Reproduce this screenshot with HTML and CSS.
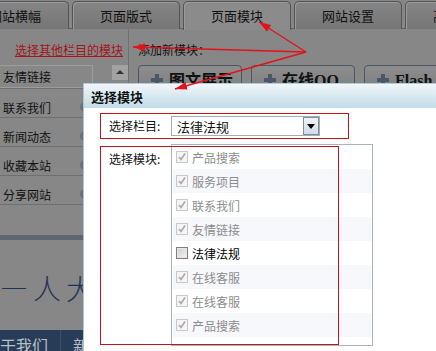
FILE: index.html
```html
<!DOCTYPE html>
<html lang="zh-CN">
<head>
    <meta charset="UTF-8">
    <meta name="viewport" content="width=device-width, initial-scale=1.0">
    <title>选择模块</title>
    <link rel="stylesheet" href="styles.css">
</head>
<body>

<div class="page">
    <div class="tabs">
        <div class="tab">网站横幅</div>
        <div class="tab">页面版式</div>
        <div class="tab active">页面模块</div>
        <div class="tab">网站设置</div>
        <div class="tab">高级设置</div>
    </div>

    <div class="main">
        <div class="side">
            <a class="side-link" href="#">选择其他栏目的模块</a>
            <ul class="mod-list">
                <li class="first"><span class="name-box">友情链接</span><span class="up-btn"></span></li>
                <li><span>联系我们</span><i class="gear"></i></li>
                <li><span>新闻动态</span><i class="gear"></i></li>
                <li><span>收藏本站</span><i class="gear"></i></li>
                <li><span>分享网站</span><i class="gear"></i></li>
            </ul>
        </div>
        <div class="content">
            <div class="add-title">添加新模块：</div>
            <div class="add-buttons">
                <div class="add-btn"><svg width="12" height="12" viewBox="0 0 12 12"><path d="M4 0h4v4h4v4h-4v4h-4v-4h-4v-4h4z" fill="#4c5666"/></svg>图文展示</div>
                <div class="add-btn"><svg width="12" height="12" viewBox="0 0 12 12"><path d="M4 0h4v4h4v4h-4v4h-4v-4h-4v-4h4z" fill="#4c5666"/></svg>在线QQ</div>
                <div class="add-btn"><svg width="12" height="12" viewBox="0 0 12 12"><path d="M4 0h4v4h4v4h-4v4h-4v-4h-4v-4h4z" fill="#4c5666"/></svg>Flash</div>
            </div>
        </div>
    </div>

    <div class="band"></div>
    <div class="banner">—人大代表</div>
    <div class="nav">
        <span class="nav-item">关于我们</span>
        <span class="nav-item">新闻中心</span>
    </div>

    <!-- popup -->
    <div class="dialog">
        <div class="dlg-title">选择模块</div>
        <div class="dlg-body">
            <div class="field">
                <label class="field-label">选择栏目:</label>
                <div class="select">
                    <span class="select-text">法律法规</span>
                    <span class="select-btn"><svg width="8" height="5" viewBox="0 0 8 5"><path d="M0 0h8l-4 5z" fill="#000"/></svg></span>
                </div>
            </div>
            <div class="field2">
                <label class="field-label">选择模块:</label>
                <div class="listbox">
                    <div class="row"><span class="cb"><svg width="10" height="10" viewBox="0 0 10 10"><path d="M2 5l2 2.5 4-6" stroke="#a9a9a9" stroke-width="1.6" fill="none"/></svg></span>产品搜索</div>
                    <div class="row"><span class="cb"><svg width="10" height="10" viewBox="0 0 10 10"><path d="M2 5l2 2.5 4-6" stroke="#a9a9a9" stroke-width="1.6" fill="none"/></svg></span>服务项目</div>
                    <div class="row"><span class="cb"><svg width="10" height="10" viewBox="0 0 10 10"><path d="M2 5l2 2.5 4-6" stroke="#a9a9a9" stroke-width="1.6" fill="none"/></svg></span>联系我们</div>
                    <div class="row"><span class="cb"><svg width="10" height="10" viewBox="0 0 10 10"><path d="M2 5l2 2.5 4-6" stroke="#a9a9a9" stroke-width="1.6" fill="none"/></svg></span>友情链接</div>
                    <div class="row on"><span class="cb"></span>法律法规</div>
                    <div class="row"><span class="cb"><svg width="10" height="10" viewBox="0 0 10 10"><path d="M2 5l2 2.5 4-6" stroke="#a9a9a9" stroke-width="1.6" fill="none"/></svg></span>在线客服</div>
                    <div class="row"><span class="cb"><svg width="10" height="10" viewBox="0 0 10 10"><path d="M2 5l2 2.5 4-6" stroke="#a9a9a9" stroke-width="1.6" fill="none"/></svg></span>在线客服</div>
                    <div class="row"><span class="cb"><svg width="10" height="10" viewBox="0 0 10 10"><path d="M2 5l2 2.5 4-6" stroke="#a9a9a9" stroke-width="1.6" fill="none"/></svg></span>产品搜索</div>
                </div>
                <div class="mark"></div>
            </div>
        </div>
    </div>

    <!-- annotation arrows -->
    <svg class="arrows" width="436" height="351" viewBox="0 0 436 351">
        <defs>
            <marker id="ah" markerWidth="12" markerHeight="8" refX="12" refY="4" orient="auto" markerUnits="userSpaceOnUse">
                <path d="M0 0L12 4L0 8z" fill="#e3121b"/>
            </marker>
        </defs>
        <g stroke="#e3121b" stroke-width="1.3">
            <line x1="306" y1="52" x2="259" y2="22" marker-end="url(#ah)"/>
            <line x1="306" y1="52" x2="133" y2="47" marker-end="url(#ah)"/>
            <line x1="306" y1="52" x2="175" y2="89" marker-end="url(#ah)"/>
        </g>
    </svg>
</div>

</body>
</html>
```

FILE: styles.css
```css
/* Reset */
* {
    box-sizing: border-box;
    margin: 0;
    padding: 0;
}

body {
    font-family: "Noto Sans CJK SC", "DejaVu Sans", sans-serif;
    font-size: 12px;
    background-color: #878787;
    overflow: hidden;
}

.page {
    position: relative;
    width: 436px;
    height: 351px;
    overflow: hidden;
}

/* top tabs */
.tabs {
    display: flex;
    height: 29px;
    margin-left: -39px;
    padding-top: 1px;
    border-bottom: 1px solid #5f5f5f;
    background-color: #878787;
}

.tab {
    flex: 0 0 108px;
    height: 28px;
    margin-right: 3px;
    border: 1px solid #545454;
    border-bottom: none;
    border-radius: 5px 5px 0 0;
    background: linear-gradient(#858585, #767676);
    box-shadow: inset 1px 1px 0 #9b9b9b;
    text-align: center;
    line-height: 27px;
    font-size: 13px;
    color: #111;
}

.tab.active {
    height: 29px;
    background: #8b8b8b;
    margin-bottom: -1px;
}

/* page body under tabs */
.main {
    display: flex;
    height: 206px;
}

.side {
    width: 139px;
    border-right: 1px solid #707070;
}

.side-link {
    display: block;
    padding: 14px 0 0 15px;
    line-height: 14px;
    color: #a3141b;
    font-size: 12px;
}

.mod-list {
    list-style: none;
    margin-top: 3px;
}

.mod-list li {
    display: flex;
    align-items: center;
    height: 29px;
    padding: 10px 0 2px 3px;
    border-bottom: 1px solid #6f6f6f;
    font-size: 12px;
    color: #111;
}

.mod-list li.first {
    padding: 5px 0 0 0;
    align-items: flex-start;
}

.name-box {
    width: 93px;
    height: 23px;
    padding: 3px 0 0 3px;
    border: 1px solid #9c9c9c;
    border-left: none;
    line-height: 16px;
}

.up-btn {
    width: 16px;
    height: 15px;
    margin-left: 19px;
    background: #a2a2a2;
    position: relative;
}

.up-btn::after {
    content: "";
    position: absolute;
    left: 4px;
    top: 5px;
    border: 4px solid transparent;
    border-top: none;
    border-bottom: 4px solid #333;
}

.gear {
    width: 10px;
    height: 10px;
    margin-left: 29px;
    border-radius: 50%;
    background: #6c6f75;
}

.content {
    flex: 1;
    padding: 14px 0 0 9px;
}

.add-title {
    line-height: 14px;
    color: #111;
}

.add-buttons {
    display: flex;
    gap: 9px;
    margin-top: 8px;
}

.add-btn {
    display: flex;
    align-items: flex-start;
    gap: 6px;
    flex: 0 0 104px;
    height: 30px;
    padding: 5px 0 0 12px;
    border: 1px solid #4d5463;
    border-radius: 4px;
    background: linear-gradient(#8d8d8d, #7c7c7c);
    font-family: "Liberation Serif", "Noto Sans CJK SC", serif;
    font-weight: bold;
    font-size: 16px;
    line-height: 20px;
    color: #111;
}

.add-btn svg {
    margin-top: 3px;
}

.band {
    height: 5px;
    background: #5e6670;
}

.banner {
    height: 90px;
    padding-top: 28px;
    font-size: 28px;
    font-weight: 300;
    letter-spacing: 5px;
    line-height: 40px;
    color: #1f3556;
    white-space: nowrap;
}

.nav {
    display: flex;
    height: 30px;
    background: #283c57;
}

.nav-item {
    padding: 0 12px;
    border-right: 1px solid #3c5068;
    font-size: 16px;
    line-height: 30px;
    color: #b8bec6;
}

.nav-item:first-child {
    margin-left: -16px;
    padding-left: 0;
}

/* dialog */
.dialog {
    position: absolute;
    left: 83px;
    top: 83px;
    width: 370px;
    height: 280px;
    background: #fff;
    border-left: 1px solid #a7c7d8;
}

.dlg-title {
    height: 25px;
    padding-left: 7px;
    border-top: 1px solid #a9d0e2;
    background: linear-gradient(#f1f6f9, #c0dce9);
    font-weight: bold;
    font-size: 13px;
    line-height: 25px;
    color: #111;
}

.dlg-body {
    padding: 5px 0 0 16px;
}

.field {
    display: flex;
    align-items: center;
    width: 249px;
    height: 26px;
    border: 1px solid #c3141c;
}

.field-label {
    width: 70px;
    padding-left: 8px;
    font-size: 12px;
    line-height: 14px;
    color: #111;
}

.select {
    display: flex;
    align-items: center;
    justify-content: space-between;
    width: 149px;
    height: 20px;
    border: 1px solid #a6adb7;
}

.select-text {
    padding-left: 5px;
    font-size: 13px;
    color: #111;
}

.select-btn {
    display: flex;
    align-items: center;
    justify-content: center;
    width: 16px;
    height: 18px;
    border: 1px solid #7b8fa3;
    background: linear-gradient(#eef3f8, #cfdce9);
}

.field2 {
    position: relative;
    display: flex;
    margin-top: 5px;
}

.field2 .field-label {
    width: 71px;
    padding-left: 9px;
    padding-top: 8px;
}

.listbox {
    width: 202px;
    height: 202px;
    border: 1px solid #aab4be;
}

.row {
    display: flex;
    align-items: center;
    gap: 4px;
    height: 24px;
    padding-left: 4px;
    font-size: 12px;
    color: #8d8d8d;
}

.row:nth-child(even) {
    background: #f6f8fc;
}

.row.on {
    color: #000;
}

.cb {
    display: flex;
    align-items: center;
    justify-content: center;
    width: 12px;
    height: 12px;
    border: 1px solid #c9c9c9;
    background: #f5f5f5;
}

.row.on .cb {
    border-color: #7e7e7e;
    background: linear-gradient(135deg, #cfcfcf, #f2f2f2);
    box-shadow: inset 0 0 0 1px #e8e8e8;
}

.mark {
    position: absolute;
    left: 0;
    top: 2px;
    width: 239px;
    height: 199px;
    border: 1px solid #c3141c;
    pointer-events: none;
}

.arrows {
    position: absolute;
    left: 0;
    top: 0;
    pointer-events: none;
}
```
